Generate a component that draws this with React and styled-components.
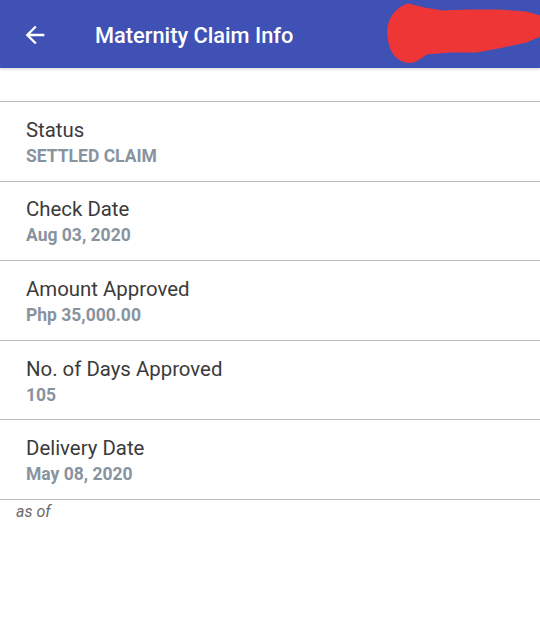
import React from 'react'
import styled, { createGlobalStyle } from 'styled-components';

const Global = createGlobalStyle`
  body {
    margin: 0;
    background: #fff;
    font-family: Roboto, "Noto Sans", sans-serif;
  }
`

const rows = [
    { label: 'Status', value: 'SETTLED CLAIM' },
    { label: 'Check Date', value: 'Aug 03, 2020' },
    { label: 'Amount Approved', value: 'Php 35,000.00' },
    { label: 'No. of Days Approved', value: '105' },
    { label: 'Delivery Date', value: 'May 08, 2020' },
]

const App = () => {
    return (
        <Page>
            <Global />
            <TopBar>
                <BackButton aria-label="back">
                    <svg width="28" height="28" viewBox="0 0 24 24">
                        <path d="M20 11H7.83l5.59-5.59L12 4l-8 8 8 8 1.41-1.41L7.83 13H20v-2z" fill="#fff" />
                    </svg>
                </BackButton>
                <Title>Maternity Claim Info</Title>
                <Scribble width="162" height="66" viewBox="0 0 162 66">
                    <path
                        d="M28 6 C16 10 8 22 10 36 C11 48 16 58 26 60 C34 62 40 56 46 52 L70 50 L96 50 L118 46 L146 40 L160 34 L160 18 L146 14 L118 12 L88 12 L62 13 L44 10 Z"
                        fill="#ef3636"
                        stroke="#ef3636"
                        strokeWidth="5"
                        strokeLinejoin="round"
                    />
                </Scribble>
            </TopBar>
            <Spacer />
            <List>
                {rows.map((r) => (
                    <Row key={r.label}>
                        <Label>{r.label}</Label>
                        <Value>{r.value}</Value>
                    </Row>
                ))}
            </List>
            <AsOf>as of</AsOf>
        </Page>
    )
}

const Page = styled.div`
display: flex;
flex-direction: column;
min-height: 629px;
`

const TopBar = styled.header`
position: relative;
height: 68px;
background: #3f51b5;
display: flex;
align-items: center;
padding: 2px 0 0 21px;
box-sizing: border-box;
box-shadow: 0 1px 3px rgba(0,0,0,0.18);
overflow: hidden;
`

const BackButton = styled.button`
border: none;
background: none;
padding: 0;
width: 28px;
height: 28px;
display: flex;
`

const Title = styled.h1`
margin: 0 0 0 46px;
color: #fff;
font-size: 21.8px;
font-weight: 500;
`

const Scribble = styled.svg`
position: absolute;
right: -2px;
top: 0;
`

const Spacer = styled.div`
height: 33px;
border-bottom: 1px solid #bdbdbd;
`

const List = styled.div`
display: flex;
flex-direction: column;
`

const Row = styled.div`
height: 79.6px;
box-sizing: border-box;
border-bottom: 1.5px solid #bdbdbd;
padding: 3px 0 0 26px;
display: flex;
flex-direction: column;
justify-content: center;
`

const Label = styled.div`
font-size: 20.4px;
color: #3b3b3b;
line-height: 26px;
`

const Value = styled.div`
font-size: 17.5px;
font-weight: 700;
color: #8893a0;
line-height: 26px;
`

const AsOf = styled.div`
padding: 2px 0 0 16px;
font-size: 16px;
font-style: italic;
color: #6b6b6b;
`

export default App;
